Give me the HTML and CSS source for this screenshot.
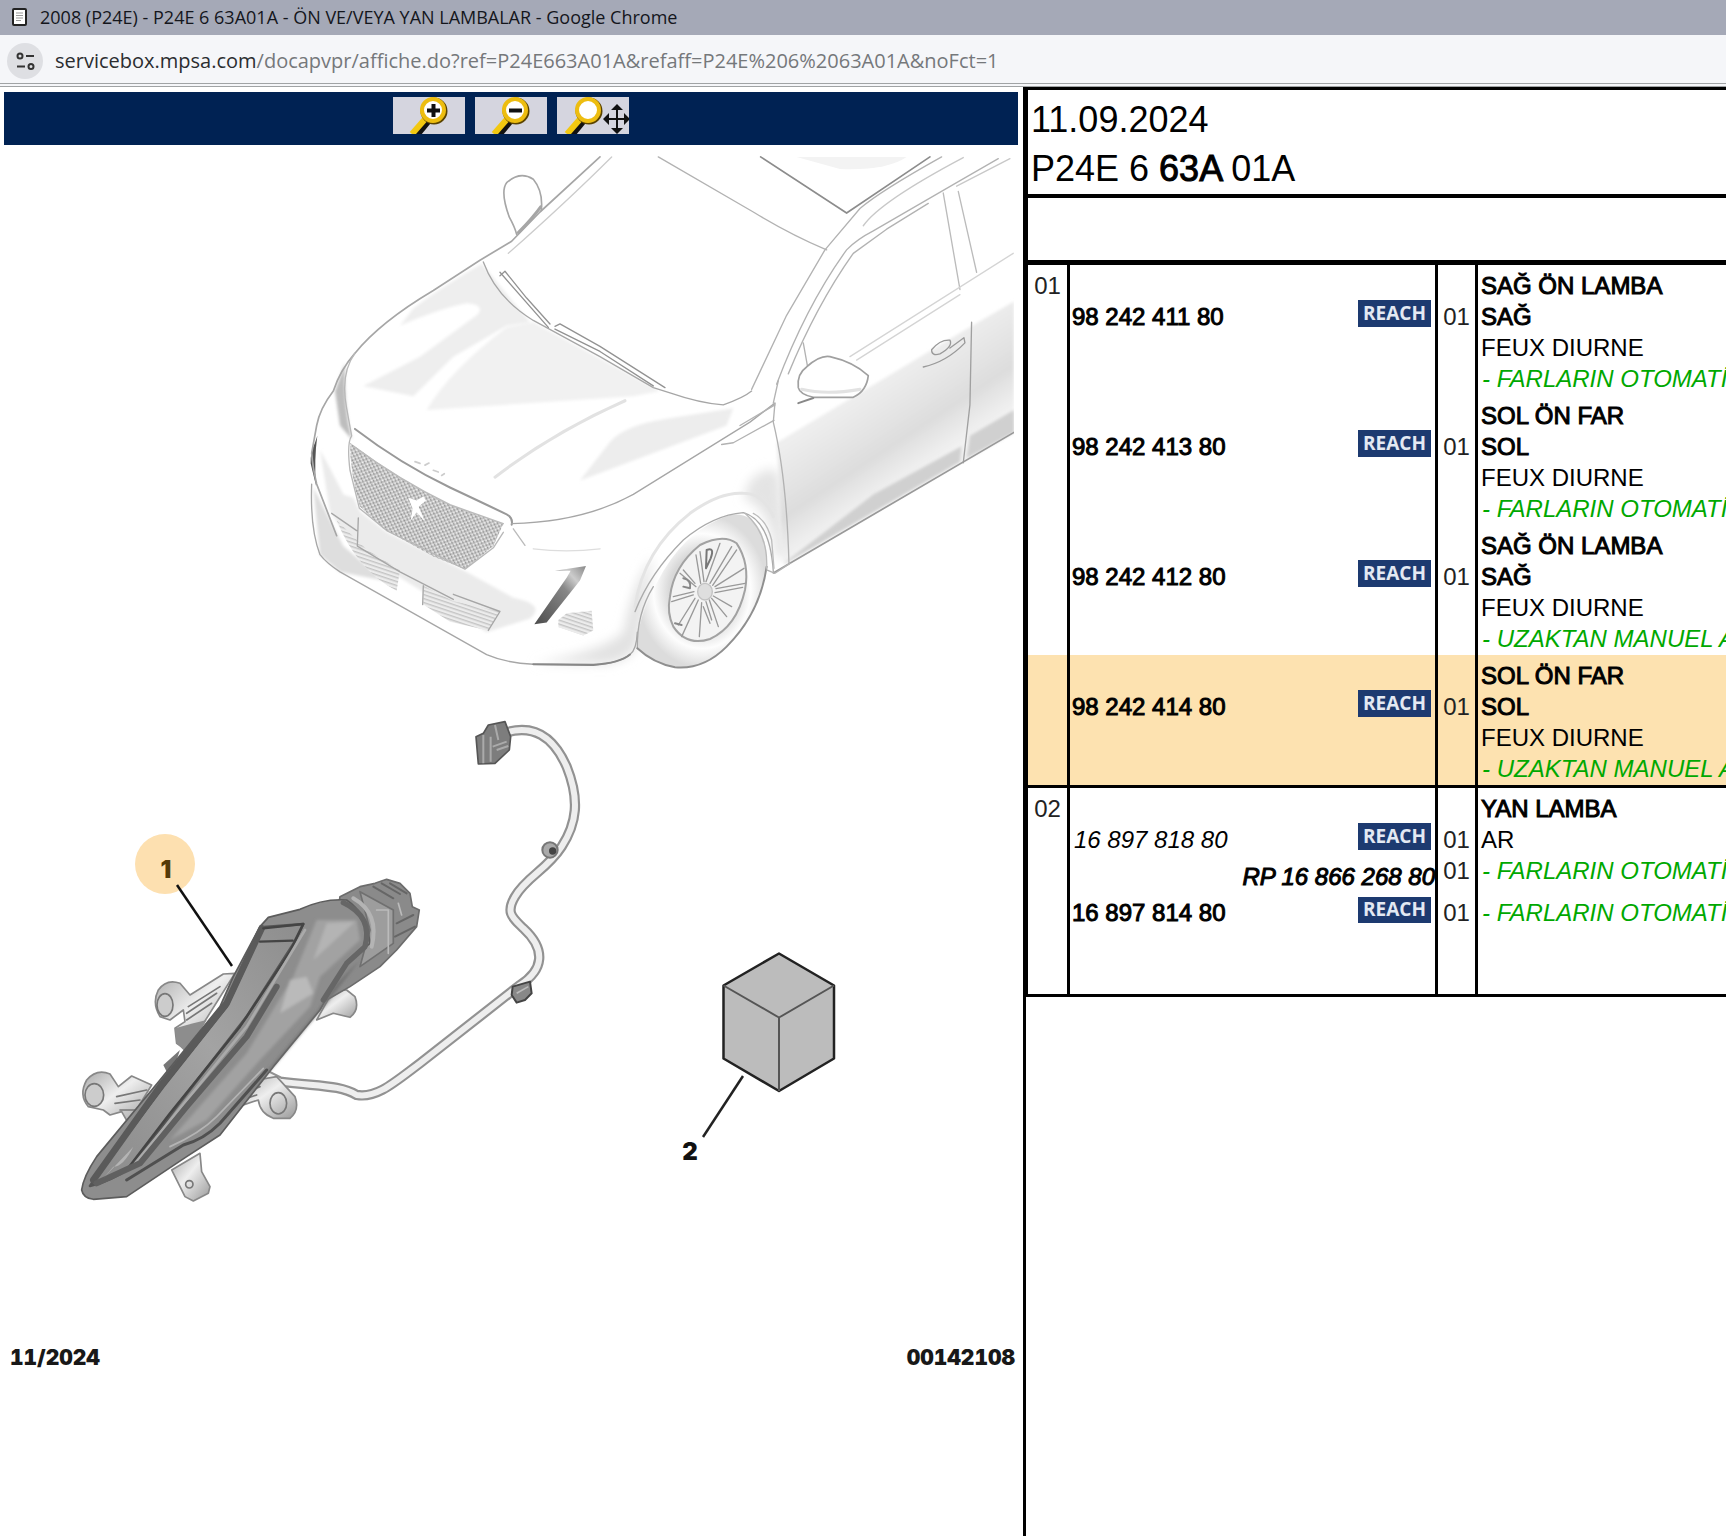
FILE: index.html
```html
<!DOCTYPE html>
<html lang="tr">
<head>
<meta charset="utf-8">
<meta name="viewport" content="width=device-width, initial-scale=1">
<title>2008 (P24E) - P24E 6 63A01A - ÖN VE/VEYA YAN LAMBALAR</title>
<link rel="stylesheet" href="styles.css">
</head>
<body>
<header class="titlebar">
  <svg class="doc-icon" viewBox="0 0 16 19" aria-hidden="true"><rect x="1" y="1" width="13" height="16" rx="1" fill="#fff" stroke="#222" stroke-width="2"/><path d="M4 5h7M4 7.500h7M4 10h7M4 12.500h5" stroke="#999" stroke-width="1"/></svg>
  <span>2008 (P24E) - P24E 6 63A01A - ÖN VE/VEYA YAN LAMBALAR - Google Chrome</span>
</header>
<div class="addressbar">
  <button class="site-info" type="button" aria-label="Site bilgileri">
    <svg viewBox="0 0 36 36" aria-hidden="true"><g fill="none" stroke="#333" stroke-width="2"><circle cx="13" cy="13" r="2.500"/><path d="M19 13h8M10 23.500h8"/><circle cx="24" cy="23.500" r="2.500"/></g></svg>
  </button>
  <span class="url"><span class="host">servicebox.mpsa.com</span>/docapvpr/affiche.do?ref=P24E663A01A&amp;refaff=P24E%206%2063A01A&amp;noFct=1</span>
</div>

<div class="frames">
<main class="drawing">
  <div class="toolbar">
    <button type="button" aria-label="Yakınlaştır">
      <svg viewBox="0 0 72 37" aria-hidden="true"><path d="M36 22 22 39" stroke="#111" stroke-width="8"/><path d="M33 21 19 37" stroke="#f2c811" stroke-width="6"/><circle cx="41" cy="14" r="12" fill="#fff" stroke="#5a4300" stroke-width="3"/><circle cx="40" cy="13" r="11" fill="#fff" stroke="#edbd10" stroke-width="4"/><path d="M34 13.500h13M40.500 7v13" stroke="#111" stroke-width="4"/></svg>
    </button>
    <button type="button" aria-label="Uzaklaştır">
      <svg viewBox="0 0 72 37" aria-hidden="true"><path d="M36 22 22 39" stroke="#111" stroke-width="8"/><path d="M33 21 19 37" stroke="#f2c811" stroke-width="6"/><circle cx="41" cy="14" r="12" fill="#fff" stroke="#5a4300" stroke-width="3"/><circle cx="40" cy="13" r="11" fill="#fff" stroke="#edbd10" stroke-width="4"/><path d="M34 13.500h13" stroke="#111" stroke-width="4"/></svg>
    </button>
    <button type="button" aria-label="Sığdır">
      <svg viewBox="0 0 72 37" aria-hidden="true"><path d="M27 22 13 39" stroke="#111" stroke-width="8"/><path d="M24 21 10 37" stroke="#f2c811" stroke-width="6"/><circle cx="32" cy="14" r="12" fill="#fff" stroke="#5a4300" stroke-width="3"/><circle cx="31" cy="13" r="11" fill="#fff" stroke="#edbd10" stroke-width="4"/><path d="M49 22h22M60 11v22" stroke="#111" stroke-width="2"/><path d="m60 7-6 6h12zM60 37l-6-6h12zM46 22l6-6v12zM73 22l-6-6v12z" fill="#111"/></svg>
    </button>
  </div>

  <svg class="plate" viewBox="0 145 1023 1380" role="img" aria-label="Ön lamba parça çizimi">
    <defs>
      <clipPath id="sheet"><rect x="0" y="156" width="1014" height="530"/></clipPath>
      <filter id="soft" x="-20%" y="-20%" width="140%" height="140%"><feGaussianBlur stdDeviation="16"/></filter>
      <filter id="soft2" x="-20%" y="-20%" width="140%" height="140%"><feGaussianBlur stdDeviation="4"/></filter>
      <pattern id="mesh" width="15" height="13" patternUnits="userSpaceOnUse" patternTransform="rotate(22)"><rect width="15" height="13" fill="#c4c4c4"/><ellipse cx="4" cy="3" rx="3" ry="2.500" fill="#f2f2f2"/><ellipse cx="12" cy="10" rx="3" ry="2.500" fill="#eee"/><path d="M8 1l4 3M1 8l4 3" stroke="#8c8c8c" stroke-width="3"/></pattern>
      <pattern id="slats" width="20" height="11" patternUnits="userSpaceOnUse" patternTransform="rotate(18)"><rect width="20" height="11" fill="#ececec"/><rect width="20" height="4" fill="#c4c4c4"/></pattern>
      <linearGradient id="door" x1="0" y1="0" x2=".6" y2="1"><stop offset=".2" stop-color="#fff"/><stop offset=".62" stop-color="#ddd"/><stop offset=".75" stop-color="#f3f3f3"/><stop offset="1" stop-color="#ddd"/></linearGradient>
      <linearGradient id="drl" x1="1" y1="0" x2="0" y2="1"><stop offset="0" stop-color="#888"/><stop offset=".22" stop-color="#ccc"/><stop offset=".4" stop-color="#888"/><stop offset="1" stop-color="#4c4c4c"/></linearGradient>
      <radialGradient id="tyre"><stop offset=".5" stop-color="#d8d8d8"/><stop offset=".75" stop-color="#fdfdfd"/><stop offset="1" stop-color="#dcdcdc"/></radialGradient>
      <linearGradient id="lens" x1="1" y1="0" x2="0" y2="1"><stop offset="0" stop-color="#8d8d8d"/><stop offset=".45" stop-color="#a3a3a3"/><stop offset="1" stop-color="#8a8a8a"/></linearGradient>
      <linearGradient id="lug" x1="0" y1="0" x2="1" y2="1"><stop offset="0" stop-color="#aaa"/><stop offset=".45" stop-color="#eee"/><stop offset="1" stop-color="#999"/></linearGradient>
    </defs>

    <!-- vehicle -->
    <g clip-path="url(#sheet)">
    <g transform="translate(300 150) scale(.3333 .3444)" stroke-linecap="round" stroke-linejoin="round">
      <g filter="url(#soft2)">
        <path d="M545 330 Q420 400 340 460 L300 510 Q420 460 500 445 Q560 450 530 480 L360 600 L190 685 L340 715 L460 600 L620 510 L690 500 Z" fill="#eeeeee"/>
        <path d="M620 515 L700 500 L1080 700 L1000 715 L380 755 Q450 640 620 515Z" fill="#f1f1f1"/>
        <path d="M1100 780 Q960 800 920 860 L840 960 L1280 800 L1300 750Z" fill="#ededed"/>
        <path d="M60 870 Q110 960 130 1000 L160 1010 L180 1050 L260 1110 L500 1225 L640 1300 Q740 1320 690 1360 L560 1400 L450 1330 L170 1165 L90 1050Z" fill="#ebebeb"/>
        <path d="M40 980 L130 1150 L250 1250 L120 1225 L60 1175Z" fill="#dedede"/>
        <path d="M105 700 L135 620 Q130 740 155 840 L120 800Z" fill="#bdbdbd"/>
      </g>
      <g filter="url(#soft)">
        <path d="M1012 1440 Q970 1500 880 1490 L700 1490 Q900 1460 970 1400 Q1000 1250 1060 1180 Z" fill="#e2e2e2"/>
        <path d="M1350 960 Q1420 900 1440 950 L1460 1190 L1425 1180 Q1420 1050 1330 1010Z" fill="#e4e4e4"/>
      </g>
      <path d="M1450 1200 L1430 850 L2000 520 L2142 440 L2142 820 L1990 905 Z" fill="url(#door)" filter="url(#soft2)"/>
      <path d="M1465 1190 Q1600 1090 1720 1000 L1985 860 L1980 905 L1450 1205Z M2010 830 L2142 755 V820 L2000 895Z" fill="#d0d0d0" filter="url(#soft2)"/>
      <path d="M150 850 Q300 960 450 1030 L610 1085 L580 1150 L495 1217 L400 1180 L250 1100 L180 1035 Q150 940 150 850Z" fill="url(#mesh)"/>
      <path d="M325 1010 l25 8 20 -12 8 12 -22 18 18 42 -24 -26 -18 24 6 -34Z" fill="#fff"/>
      <path d="M110 1075 L200 1160 L300 1220 L290 1280 Q170 1220 110 1075Z M370 1265 L460 1310 L600 1340 L565 1395 L450 1370 L370 1320Z" fill="url(#slats)"/>
      <path d="M775 1365 L800 1345 L875 1338 L880 1395 L850 1410 L775 1385Z" fill="url(#slats)"/>
      <path d="M858 1208 L840 1250 L740 1372 L703 1377 L800 1242 L812 1222 L765 1222Z" fill="url(#drl)"/>
      <path d="M45 850 Q30 880 32 910 L48 975 Q42 900 52 830Z" fill="#555"/>
      <g fill="none" stroke="#a6a6a6" stroke-width="4">
        <path d="M900 20 L720 180 L635 265 L540 320 L400 408 Q240 500 165 590 Q120 640 100 700 Q60 750 50 800 L35 880 Q38 920 50 970 L110 1120" stroke-width="5"/>
        <path d="M650 245 Q645 225 628 195 Q600 120 620 95 Q660 60 700 85 Q730 120 724 175" stroke-width="5"/>
        <path d="M722 165 Q700 195 655 240" stroke-width="9"/>
        <path d="M165 590 Q120 650 140 750 L155 830 Q140 850 150 930 L178 1040 L260 1105 L495 1217 L580 1155 L610 1110" stroke="#b8b8b8"/>
        <path d="M165 810 Q300 910 450 980 Q560 1030 620 1058 Q640 1068 635 1088" stroke="#999" stroke-width="6"/>
        <path d="M160 860 Q300 960 450 1030 L610 1085" stroke="#bbb"/>
        <path d="M635 1085 Q850 1080 1000 1000 L1350 790 L1425 735"/>
        <path d="M640 1100 L675 1148" stroke="#bbb"/><path d="M700 1158 Q800 1170 900 1158" stroke="#ddd"/>
        <path d="M35 970 Q30 1100 60 1175 Q80 1200 120 1225 L560 1465 Q620 1490 700 1493 L880 1495 Q960 1490 990 1465 Q1010 1450 1012 1400"/>
        <path d="M700 1493 L880 1495 Q960 1490 990 1465" stroke="#888" stroke-width="6"/>
        <path d="M95 1055 L170 1105 M175 1068 L172 1150 L300 1225 L460 1305 M460 1290 L600 1340 L565 1395 M370 1265 L368 1320"/>
        <path d="M550 325 Q590 430 700 495 L900 600 L1060 690 L1110 705 Q1200 735 1270 740 Q1330 720 1355 700"/>
        <path d="M600 355 L745 515 M600 365 L615 352 L680 430 L750 505 M765 512 L780 505 L900 570 L1095 690 M765 520 L900 585 L1060 685" stroke="#929292"/>
      </g>
      <path d="M345 905l15 5M375 915l12 -6M400 930l15 5M425 945l8-5" stroke="#ccc" stroke-width="5"/>
      <path d="M585 950 Q760 820 975 728" stroke="#e2e2e2" stroke-width="9" fill="none"/>
      <path d="M935 20 Q800 150 625 300" stroke="#ccc" stroke-width="4" fill="none"/>
      <!-- side and roof -->
      <g transform="translate(1020 0)" fill="none" stroke="#b2b2b2" stroke-width="4">
        <path d="M470 20 H800 Q740 60 600 55Z" fill="#f3f3f3" stroke="none"/>
        <path d="M55 20 L340 180 Q450 245 560 290"/>
        <path d="M362 20 L620 183 L870 20" stroke="#8c8c8c" stroke-width="5"/>
        <path d="M335 695 L440 480 L555 290 L660 170 Q720 120 905 20"/>
        <path d="M410 680 Q500 450 620 290 Q650 260 700 235 L950 95 L1075 25M445 650 Q530 450 640 300 L740 230 L865 155"/>
        <path d="M670 220 Q720 150 970 22M950 105 L1110 25" stroke="#c8c8c8"/>
        <path d="M910 125 L960 405 M955 120 L1010 355" stroke="#bbb"/><path d="M630 600 L1120 300 M650 610 L960 420" stroke="#d4d4d4"/>
        <path d="M400 735 L415 670M405 735 L400 790 Q440 950 447 1200"/>
        <path d="M300 800 L405 740M245 855 L280 850 L402 785"/>
        <path d="M995 500 L990 740 L970 908" stroke="#a0a0a0"/>
        <path d="M490 560 L503 630"/>
        <path d="M475 690 Q470 650 500 630 Q540 595 570 600 Q640 615 685 655 Q680 700 640 718 L520 718 Q480 710 475 690Z" fill="#fff" stroke="#a0a0a0" stroke-width="5"/>
        <path d="M485 695 Q560 712 660 695" stroke="#e2e2e2" stroke-width="9"/>
        <path d="M475 735 L520 720" stroke="#888" stroke-width="6"/>
        <path d="M875 580 Q900 550 930 552 Q940 570 900 592Q875 600 875 580ZM850 630 Q920 615 975 560 L972 545 L930 575" stroke="#999"/>
        <path d="M400 1228 L1122 820" stroke="#999" stroke-width="5"/>
      </g>
    </g>
    <!-- front wheel -->
    <g transform="translate(620 440) scale(.3333)" fill="none" stroke="#aaa" stroke-width="4" stroke-linecap="round" stroke-linejoin="round">
      <path d="M45 500 Q70 330 210 220 Q300 155 370 160 Q430 160 460 230" stroke="#e4e4e4" stroke-width="9"/>
      <path d="M52 625 Q50 540 110 430 Q190 270 330 225 Q390 215 420 270 Q445 320 440 380 Q420 520 320 620 Q250 690 165 682 Q100 670 52 625Z" fill="url(#tyre)" stroke="none"/>
      <path d="M45 515 Q90 400 190 300 Q280 225 370 218 Q450 240 460 395"/>
      <path d="M52 625 Q50 520 100 440"/>
      <path d="M52 625 Q100 670 165 682 Q250 690 320 620 Q420 520 440 380" stroke="#8f8f8f" stroke-width="6"/>
      <path d="M440 385 Q445 280 375 220M400 220 Q440 240 455 300 L462 385" stroke="#bbb"/>
      <path d="M440 390 L465 400 L510 370" stroke="#b2b2b2"/>
      <path d="M150 470 Q160 380 240 315 Q310 280 350 310 Q390 370 375 450 Q350 560 270 597 Q200 620 160 560 Q140 520 150 470Z" fill="#f3f3f3" stroke="#a2a2a2" stroke-width="6"/>
      <g stroke="#999"><path d="M242 430 L228 345M252 425 L240 335M258 425 L300 310M270 430 L335 320M278 436 L350 330M285 440 L372 385M288 446 L375 430M285 458 L368 442M280 468 L335 500M275 475 L320 530M268 480 L295 560M258 485 L275 540M245 488 L238 590M250 500 L270 550M235 480 L185 590M225 475 L175 555M220 465 L155 485M222 455 L160 470M228 440 L180 400M225 430 L190 390"/></g>
      <path d="M260 330 Q285 320 272 355 L258 385Z" stroke="#777" stroke-width="6"/>
      <path d="M190 415 Q215 420 210 445 L190 440M165 550 L185 555" stroke="#888" stroke-width="6"/>
      <ellipse cx="255" cy="455" rx="22" ry="25" fill="#dedede" stroke="#c2c2c2"/>
    </g>
    </g>

    <!-- harness -->
    <g transform="translate(420 700) scale(.3333)" fill="none" stroke-linejoin="round">
      <path d="M250 100 C340 70 400 110 440 200 C480 300 470 370 425 440 C380 510 320 530 285 590 C255 640 280 655 310 685 C380 750 370 810 300 855 L0 1090 C-80 1150 -130 1195 -190 1185 C-240 1155 -300 1160 -420 1145 L-470 1120" stroke="#929292" stroke-width="31"/>
      <path d="M250 100 C340 70 400 110 440 200 C480 300 470 370 425 440 C380 510 320 530 285 590 C255 640 280 655 310 685 C380 750 370 810 300 855 L0 1090 C-80 1150 -130 1195 -190 1185 C-240 1155 -300 1160 -420 1145 L-470 1120" stroke="#eee" stroke-width="18"/>
      <path d="M168 110 L190 100 L205 75 L255 65 L272 110 L268 150 L225 190 L175 192Z" fill="#7d7d7d" stroke="#555" stroke-width="5"/>
      <path d="M190 105 V190M212 110 V185M225 75 L235 120M218 140 L260 125M230 150 L265 138" stroke="#aaa" stroke-width="6"/>
      <circle cx="390" cy="450" r="23" fill="#aaa" stroke="#777" stroke-width="6"/><circle cx="398" cy="453" r="11" fill="#444"/>
      <path d="M278 860 L330 845 L335 880 L315 900 L290 908 L275 885Z" fill="#888" stroke="#444" stroke-width="6"/><path d="M290 880l35-20" stroke="#bbb" stroke-width="5"/>
    </g>

    <!-- lamp unit -->
    <g transform="translate(60 820) scale(.3333)" stroke-linejoin="round" stroke-linecap="round">
      <g fill="url(#lug)" stroke="#888" stroke-width="5">
        <path d="M525 460 L490 462 L390 525 L360 490 Q320 475 295 510 Q275 550 300 590 L330 600 L370 570 L375 605 L345 625 L350 670 L380 690Z"/>
        <path d="M275 795 L215 768 L175 800 L150 762 Q110 745 80 780 Q55 825 85 860 L130 870 L150 885 L185 875 L205 910Z"/>
        <path d="M590 780 L650 770 L705 830 Q720 870 690 895 L640 895 Q600 880 595 840 L535 860Z"/>
        <path d="M770 600 L820 580 L870 592 Q900 570 885 530 L860 510 L820 510Z"/>
        <path d="M335 1050 L420 1000 L425 1055 L450 1100 L445 1120 L400 1143 L375 1130Z"/>
      </g>
      <g fill="none" stroke="#777" stroke-width="5"><ellipse cx="315" cy="555" rx="24" ry="34" fill="#ccc"/><ellipse cx="103" cy="825" rx="28" ry="34" fill="#ccc"/><path d="M480 500 L385 560M470 520 L380 580M455 550 L380 600M170 830 L260 810M165 850 L240 840M180 870 L225 870M550 820 L600 800M545 840 L590 825"/><circle cx="388" cy="1093" r="11"/><ellipse cx="655" cy="850" rx="25" ry="32"/></g>
      <path d="M345 625 L400 610 L440 600 L380 700 L350 670Z" fill="#8d8d8d"/>
      <path d="M360 690 L310 735 L320 755 L340 750Z" fill="#777"/>
      <path d="M840 230 L900 200 L945 190 L980 178 L1020 190 L1050 220 L1057 260 L1078 270 L1070 320 L1010 390 L960 440 L870 500 L800 540Z" fill="#8a8a8a" stroke="#6c6c6c" stroke-width="5"/>
      <path d="M940 200 L1000 235M965 190 L1020 222M990 190 L1040 220M1010 310 L1060 285M1005 350 L1065 320" stroke="#666" stroke-width="6"/>
      <path d="M900 215 L1000 270 L1000 370 L900 440 L930 330Z" fill="#9d9d9d" stroke="#707070" stroke-width="5"/>
      <path d="M950 270 H985 V400M1015 250l10 35" fill="none" stroke="#bbb" stroke-width="5"/>
      <path d="M65 1110 Q70 1070 110 1010 L300 780 L480 560 L520 470 L600 320 L625 292 L720 268 Q790 235 860 240 Q920 280 930 370 L860 430 L780 570 L640 740 L480 945 L380 1010 L200 1130 L100 1138 Q70 1135 65 1110Z" fill="#8d8d8d" stroke="#5c5c5c" stroke-width="5"/>
      <g filter="url(#soft2)">
        <path d="M770 300 L890 300 L900 360 L780 470 L750 560 L600 720 L440 900 L330 960 L560 700 L700 470Z" fill="#a2a2a2"/>
        <path d="M690 480 L740 470 L760 520 L660 580Z" fill="#bababa"/>
        <path d="M800 310 L885 305 L760 420Z" fill="#b4b4b4"/>
        <path d="M775 570 L820 500 L900 420 L800 550 L640 740 L490 910Z" fill="#727272"/>
      </g>
      <path d="M602 322 L730 312 L700 372 L560 590 L350 860 L215 1040 Q150 1085 90 1098 L130 1040 L310 800 L500 560 L570 410Z" fill="url(#lens)" stroke="#555" stroke-width="8"/>
      <path d="M605 325 L500 550 L300 800 L100 1080" fill="none" stroke="#5a5a5a" stroke-width="20"/>
      <path d="M600 365 L698 362 M610 325 L730 312 L690 395 L540 620 L330 880 L200 1050" fill="none" stroke="#444" stroke-width="7"/>
      <path d="M735 330 L560 620 L340 890 L225 1030" fill="none" stroke="#aaa" stroke-width="8"/>
      <path d="M650 500 L560 650 L380 860 L240 1030 L110 1090" fill="none" stroke="#606060" stroke-width="18"/>
      <path d="M160 1040 Q190 1040 220 980 L130 1075Z" fill="#b4b4b4"/>
      <path d="M620 750 L480 910 Q430 960 370 975 L200 1080" fill="none" stroke="#505050" stroke-width="9"/>
      <path d="M610 745 L470 890 Q420 940 330 980" fill="none" stroke="#b4b4b4" stroke-width="5"/>
      <path d="M850 248 Q940 290 915 380 L860 430 L790 540" fill="none" stroke="#666" stroke-width="16"/>
      <path d="M880 235 Q960 280 935 380" fill="none" stroke="#b4b4b4" stroke-width="12"/>
    </g>

    <!-- accessory kit -->
    <g stroke="#222" stroke-width="2.500" stroke-linejoin="round">
      <path d="M779 953.500 834 985.500V1058.500L779 1091 723.500 1058.500V985.500Z" fill="#bcbcbc"/>
      <path d="M723.500 985.500 779 1017.500 834 985.500M779 1017.500V1091" fill="none" stroke="#555" stroke-width="2"/>
      <path d="M743 1076 703 1137"/>
    </g>

    <circle cx="165" cy="864" r="30" fill="#fde0b0"/>
    <path d="M177 885 232 966" stroke="#111" stroke-width="2.500"/>
    <text class="callout callout-on" x="166" y="878" text-anchor="middle">1</text>
    <text class="callout" x="690" y="1160" text-anchor="middle">2</text>
    <text class="stamp" x="10" y="1365">11/2024</text>
    <text class="stamp" x="1015" y="1365" text-anchor="end">00142108</text>
  </svg>
</main>

<aside class="parts">
  <div class="sheet-head">
    <div>11.09.2024</div>
    <div>P24E 6 <b>63A</b> 01A</div>
  </div>
  <div class="sheet-gap"></div>
  <table class="list">
    <colgroup><col class="c-mark"><col class="c-ref"><col class="c-qty"><col></colgroup>
    <tbody>
      <tr class="variant">
        <td>01</td>
        <td class="below"><div class="ref"><b>98 242 411 80</b><span class="reach">REACH</span></div></td>
        <td class="below">01</td>
        <td><b>SAĞ ÖN LAMBA</b><br><b>SAĞ</b><br>FEUX DIURNE<br><i>- FARLARIN OTOMATİ</i></td>
      </tr>
      <tr class="variant">
        <td></td>
        <td class="below"><div class="ref"><b>98 242 413 80</b><span class="reach">REACH</span></div></td>
        <td class="below">01</td>
        <td><b>SOL ÖN FAR</b><br><b>SOL</b><br>FEUX DIURNE<br><i>- FARLARIN OTOMATİ</i></td>
      </tr>
      <tr class="variant">
        <td></td>
        <td class="below"><div class="ref"><b>98 242 412 80</b><span class="reach">REACH</span></div></td>
        <td class="below">01</td>
        <td><b>SAĞ ÖN LAMBA</b><br><b>SAĞ</b><br>FEUX DIURNE<br><i>- UZAKTAN MANUEL A</i></td>
      </tr>
      <tr class="variant selected">
        <td></td>
        <td class="below"><div class="ref"><b>98 242 414 80</b><span class="reach">REACH</span></div></td>
        <td class="below">01</td>
        <td><b>SOL ÖN FAR</b><br><b>SOL</b><br>FEUX DIURNE<br><i>- UZAKTAN MANUEL A</i></td>
      </tr>
    </tbody>
    <tbody>
      <tr>
        <td>02</td>
        <td class="below"><div class="ref"><em>16 897 818 80</em><span class="reach">REACH</span></div></td>
        <td class="below">01</td>
        <td><b>YAN LAMBA</b><br>AR</td>
      </tr>
      <tr class="follow replaced">
        <td></td>
        <td class="replacement"><b>RP 16 866 268 80</b></td>
        <td>01</td>
        <td><i>- FARLARIN OTOMATİ</i></td>
      </tr>
      <tr class="follow last">
        <td></td>
        <td><div class="ref"><b>16 897 814 80</b><span class="reach">REACH</span></div></td>
        <td>01</td>
        <td><i>- FARLARIN OTOMATİ</i></td>
      </tr>
    </tbody>
  </table>
</aside>
</div>
</body>
</html>
```
FILE: styles.css
```css
* { box-sizing: border-box; }

body {
  margin: 0;
  min-height: 100vh;
  display: flex;
  flex-direction: column;
  background: #fff;
  color: #000;
  font-family: "Liberation Sans", Arial, sans-serif;
  overflow-x: hidden;
}

/* window chrome */
.titlebar {
  display: flex;
  align-items: center;
  gap: 12px;
  height: 35px;
  padding-left: 12px;
  background: #a5a9b7;
  color: #14161c;
  font: 18px/35px "Open Sans", "Noto Sans", sans-serif;
  white-space: nowrap;
}
.doc-icon { width: 16px; height: 19px; }
.addressbar {
  display: flex;
  align-items: center;
  gap: 12px;
  height: 52px;
  padding: 3px 0 0 7px;
  background: #f5f6f9;
  border-bottom: 4px double #a0a3a5;
  color: #75787b;
  font: 20px/44px "Open Sans", "Noto Sans", sans-serif;
  white-space: nowrap;
}
.host { color: #2b2d30; }
.site-info {
  width: 36px;
  height: 36px;
  padding: 0;
  border: 0;
  border-radius: 50%;
  background: #dedfe3;
}
.site-info svg { display: block; }

/* two frames */
.frames {
  flex: 1;
  display: grid;
  grid-template-columns: minmax(0, 1023fr) minmax(0, 703fr);
}
.toolbar {
  display: flex;
  justify-content: center;
  gap: 10px;
  margin: 5px 5px 0 4px;
  padding: 5px 0 11px;
  background: #002253;
}
.toolbar button {
  width: 72px;
  height: 37px;
  padding: 0;
  border: 0;
  background: #d5d5df;
}
.toolbar svg { display: block; width: 72px; height: 37px; }
.plate { display: block; width: 100%; }
.callout { font: 900 24px "Inter", sans-serif; fill: #111; }
.callout-on { fill: #553a08; }
.stamp { font: 900 21px "Inter", sans-serif; font-variant-numeric: tabular-nums; fill: #181818; }

/* parts list */
.parts { border-left: 3px solid #000; overflow: hidden; }
.sheet-head {
  padding: 5px 0 1px 3px;
  border: solid #000;
  border-width: 3px 0 4px 2px;
  font-size: 36px;
  line-height: 49px;
}
.sheet-gap {
  height: 67px;
  border: solid #000;
  border-width: 0 0 5px 2px;
}
.list {
  width: 100%;
  table-layout: fixed;
  border-collapse: separate;
  border-spacing: 0;
  border-left: 2px solid #000;
  font-size: 24px;
  line-height: 31px;
  white-space: nowrap;
}
.c-mark { width: 42px; }
.c-ref { width: 368px; }
.c-qty { width: 40px; }
.list td {
  padding: 5px 0 0;
  border-right: 3px solid #000;
  vertical-align: top;
  overflow: hidden;
}
.list td:nth-child(1), .list td:nth-child(3) { text-align: center; color: #222; }
.list td:nth-child(2) { padding-left: 2px; }
.list td:nth-child(4) { padding-left: 3px; border-right: 0; }
.list .below { padding-top: 36px; }
.list .follow td { padding-top: 0; }
.list .follow .replacement { padding-top: 6px; text-align: right; font-style: italic; }
.list tbody tr:last-child td { border-bottom: 3px solid #000; }
.variant { height: 130px; }
.variant.selected { height: 133px; background: #fde2b0; }
.replaced { height: 42px; }
.last { height: 100px; }
.ref { display: flex; justify-content: space-between; align-items: flex-start; padding-right: 4px; }
.ref em { padding-left: 2px; }
.reach {
  width: 73px;
  height: 27px;
  margin-top: -1px;
  background: #1d3a70;
  color: #e3e9f3;
  font: 700 19px/26px "Open Sans", sans-serif;
  text-align: center;
}

/* the list is set in regular letters thickened by an outline */
b { font-weight: 400; -webkit-text-stroke: 1px currentColor; }
.list i { padding-left: 1px; color: #00a800; }
```
